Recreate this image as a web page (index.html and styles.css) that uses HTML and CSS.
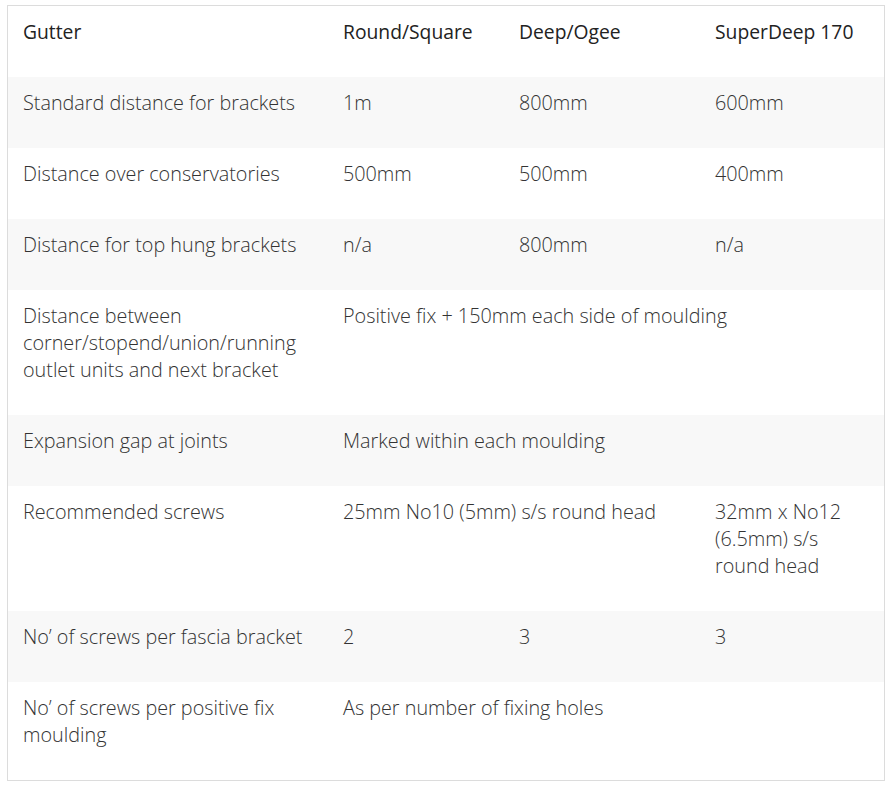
FILE: index.html
```html
<!DOCTYPE html>
<html>
<head>
<meta charset="utf-8">
<link rel="stylesheet" href="styles.css">
</head>
<body>
<div class="wrap">
  <div class="frame">
    <table class="spec">
      <colgroup>
        <col class="c1"><col class="c2"><col class="c3"><col class="c4">
      </colgroup>
      <thead>
        <tr>
          <th>Gutter</th><th>Round/Square</th><th>Deep/Ogee</th><th>SuperDeep 170</th>
        </tr>
      </thead>
      <tbody>
        <tr><td>Standard distance for brackets</td><td>1m</td><td>800mm</td><td>600mm</td></tr>
        <tr><td>Distance over conservatories</td><td>500mm</td><td>500mm</td><td>400mm</td></tr>
        <tr><td>Distance for top hung brackets</td><td>n/a</td><td>800mm</td><td>n/a</td></tr>
        <tr><td>Distance between corner/stopend/union/running outlet units and next bracket</td><td colspan="3">Positive fix + 150mm each side of moulding</td></tr>
        <tr><td>Expansion gap at joints</td><td colspan="3">Marked within each moulding</td></tr>
        <tr><td>Recommended screws</td><td colspan="2">25mm No10 (5mm) s/s round head</td><td>32mm x No12 (6.5mm) s/s round head</td></tr>
        <tr><td>No’ of screws per fascia bracket</td><td>2</td><td>3</td><td>3</td></tr>
        <tr><td>No’ of screws per positive fix moulding</td><td colspan="3">As per number of fixing holes</td></tr>
      </tbody>
    </table>
  </div>
</div>
</body>
</html>
```
FILE: styles.css
```css
html, body {
  margin: 0;
  padding: 0;
  background: #fff;
}
.wrap {
  padding: 5px 7px;
}
.frame {
  width: 876px;
  border: 1px solid #dcdcdc;
}
.spec {
  width: 876px;
  border-collapse: collapse;
  table-layout: fixed;
  font-family: "Open Sans", "Liberation Sans", sans-serif;
  line-height: 27px;
}
.c1 { width: 320px; }
.c2 { width: 176px; }
.c3 { width: 196px; }
.c4 { width: 184px; }
.spec th,
.spec td {
  text-align: left;
  vertical-align: top;
  padding: 12px 15px 32px 15px;
}
.spec th {
  font-size: 19.3px;
  font-weight: 400;
  color: #222;
}
.spec td {
  font-size: 19.8px;
  font-weight: 300;
  color: #333;
}
.spec tbody tr:nth-child(odd) {
  background: #f8f8f8;
}
```
